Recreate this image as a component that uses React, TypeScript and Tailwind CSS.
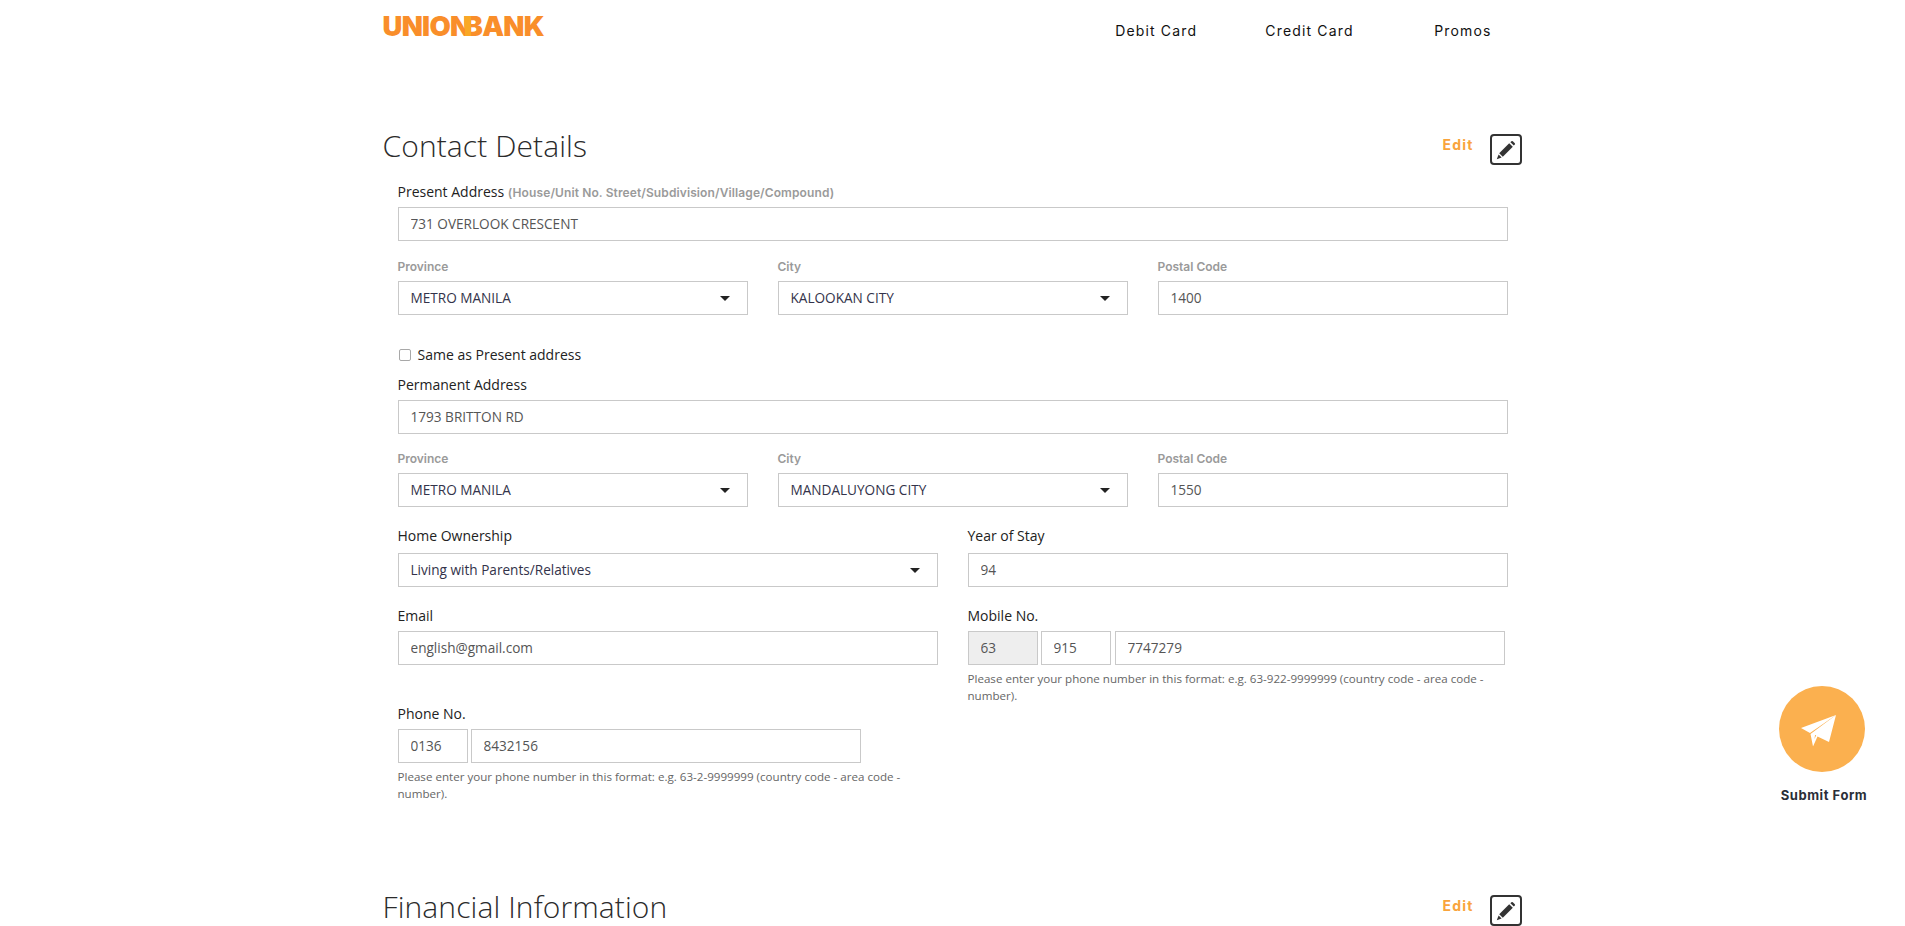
import React from 'react';

const inputClass = 'block w-full h-[34px] border border-[#c9c9c9] bg-white px-[12px] text-[13.6px] text-[#555] outline-none';

const Label = ({ children }: { children: React.ReactNode }) => (
    <label className="block h-[20px] leading-[20px] text-[14px] text-[#222]">{children}</label>
);

const SubLabel = ({ children }: { children: React.ReactNode }) => (
    <label className="block h-[20px] leading-[22px] text-[12px] font-semibold text-[#9a9a9a] font-['Inter',sans-serif] mb-[5px]">{children}</label>
);

const TextInput = ({ value, className = '' }: { value: string; className?: string }) => (
    <input type="text" readOnly value={value} className={`${inputClass} pb-[2px] ${className}`} />
);

const SelectBox = ({ value }: { value: string }) => (
    <div className="relative">
        <select value={value} onChange={() => {}} className={`${inputClass} appearance-none text-[#33334a]`}>
            <option>{value}</option>
        </select>
        <span className="absolute right-[18px] top-[15px] border-x-[5.5px] border-t-[5px] border-x-transparent border-t-[#222]" />
    </div>
);

const PencilIcon = () => (
    <svg width="20" height="20" viewBox="0 0 20 20" fill="#333">
        <path d="M14.4 2.2 L15.4 1.2 Q16.1 0.6 16.8 1.2 L18.8 3.2 Q19.4 3.9 18.8 4.6 L17.8 5.6 Z" />
        <path d="M13.2 3.2 L16.8 6.8 L6.8 16.8 L3.2 13.2 Z" />
        <path d="M2.6 14.4 L5.6 17.4 L0.8 19.2 Z" />
    </svg>
);

const SectionTitle = ({ title }: { title: string }) => (
    <div className="flex items-start justify-between h-[35px]">
        <h2 className="text-[30px] leading-[32px] font-light tracking-[0.1px] text-[#2b2b2b]">{title}</h2>
        <div className="flex items-start gap-[16px] mt-[4px] mr-[1px]">
            <span className="text-[14px] leading-[22px] font-bold tracking-[1.2px] text-[#f9a43c] font-['Inter',sans-serif]">Edit</span>
            <span className="flex items-center justify-center w-[32px] h-[31px] border-2 border-[#333] rounded-[4px]">
                <PencilIcon />
            </span>
        </div>
    </div>
);

const AddressRow = ({ city, postal }: { city: string; postal: string }) => (
    <div className="grid grid-cols-3 gap-x-[30px]">
        <div>
            <SubLabel>Province</SubLabel>
            <SelectBox value="METRO MANILA" />
        </div>
        <div>
            <SubLabel>City</SubLabel>
            <SelectBox value={city} />
        </div>
        <div>
            <SubLabel>Postal Code</SubLabel>
            <TextInput value={postal} />
        </div>
    </div>
);

const HelpText = ({ children }: { children: React.ReactNode }) => (
    <p className="mt-[5px] text-[11.6px] leading-[17px] text-[#666]">{children}</p>
);

export default function App() {
    return (
        <div className="relative h-[926px] overflow-hidden bg-white font-['Open_Sans',sans-serif]">
            <div className="w-[1170px] mx-auto px-[15px]">
                <header className="flex justify-between h-[130px]">
                    <div className="relative h-[20px] mt-[16px] flex items-center text-[27.5px] leading-[20px] font-black tracking-[-0.7px] text-[#f98e2a] font-['Inter',sans-serif]">
                        <span>UNION</span>
                        <span className="-ml-[6px]">BANK</span>
                        <span className="absolute left-[82px] top-0 w-[6px] h-[20px] bg-[#f9a825]" />
                    </div>
                    <nav className="grid grid-cols-3 w-[460px] h-[20px] mt-[21px] -mr-[17px] text-[14px] leading-[20px] tracking-[1.15px] text-[#111] text-center font-['Inter',sans-serif]">
                        <a>Debit Card</a>
                        <a>Credit Card</a>
                        <a>Promos</a>
                    </nav>
                </header>

                <section>
                    <SectionTitle title="Contact Details" />
                    <div className="px-[15px] mt-[17px]">
                        <Label>
                            Present Address{' '}
                            <span className="text-[12px] font-semibold tracking-[0.11px] text-[#9a9a9a] font-['Inter',sans-serif]">(House/Unit No. Street/Subdivision/Village/Compound)</span>
                        </Label>
                        <TextInput value="731 OVERLOOK CRESCENT" className="mt-[5px] mb-[15px]" />
                        <AddressRow city="KALOOKAN CITY" postal="1400" />

                        <label className="flex items-center h-[20px] mt-[29px] text-[14px] text-[#222]">
                            <input type="checkbox" className="appearance-none w-[12px] h-[12px] mt-[2px] ml-[1px] mr-[7px] bg-white border border-[#a8a8a8] rounded-[2px]" />
                            Same as Present address
                        </label>

                        <div className="mt-[11px]">
                            <Label>Permanent Address</Label>
                            <TextInput value="1793 BRITTON RD" className="mt-[5px] mb-[14px]" />
                        </div>
                        <AddressRow city="MANDALUYONG CITY" postal="1550" />

                        <div className="grid grid-cols-2 gap-x-[30px] mt-[19px]">
                            <div>
                                <Label>Home Ownership</Label>
                                <div className="mt-[7px]">
                                    <SelectBox value="Living with Parents/Relatives" />
                                </div>
                            </div>
                            <div>
                                <Label>Year of Stay</Label>
                                <TextInput value="94" className="mt-[7px]" />
                            </div>
                        </div>

                        <div className="grid grid-cols-2 gap-x-[30px] mt-[19px]">
                            <div>
                                <Label>Email</Label>
                                <TextInput value="english@gmail.com" className="mt-[5px]" />
                            </div>
                            <div>
                                <Label>Mobile No.</Label>
                                <div className="flex gap-[3px] mt-[5px] w-[537px]">
                                    <TextInput value="63" className="!w-[70px] shrink-0 !bg-[#eeeeee]" />
                                    <TextInput value="915" className="!w-[70px] shrink-0" />
                                    <TextInput value="7747279" className="flex-1 ml-[1px]" />
                                </div>
                                <HelpText>Please enter your phone number in this format: e.g. 63-922-9999999 (country code - area code - number).</HelpText>
                            </div>
                        </div>

                        <div className="grid grid-cols-2 gap-x-[30px]">
                            <div>
                                <Label>Phone No.</Label>
                                <div className="flex gap-[3px] mt-[5px] w-[463px]">
                                    <TextInput value="0136" className="!w-[70px] shrink-0" />
                                    <TextInput value="8432156" className="flex-1" />
                                </div>
                                <HelpText>Please enter your phone number in this format: e.g. 63-2-9999999 (country code - area code - number).</HelpText>
                            </div>
                        </div>
                    </div>
                </section>

                <section className="mt-[89px]">
                    <SectionTitle title="Financial Information" />
                </section>
            </div>

            <div className="absolute left-[1779px] top-[686px] flex flex-col items-center w-[86px]">
                <div className="flex items-center justify-center w-[86px] h-[86px] rounded-full bg-[#fbb04f]">
                    <svg width="36" height="32" viewBox="0 0 36 32" fill="white" className="-translate-x-[3px] translate-y-[1.5px]">
                        <path d="M35 0.5 L0 13.5 L9 18.5 Z" />
                        <path d="M35 0.5 L9.5 19.5 L12 32 L16.5 22 L28 27.5 Z M14 20.5 L13.5 24.5 L15.2 20.8 Z" fillRule="evenodd" />
                    </svg>
                </div>
                <span className="mt-[13px] ml-[4px] whitespace-nowrap text-[13px] leading-[20px] font-bold tracking-[0.55px] text-[#2b2f38] font-['Inter',sans-serif]">Submit Form</span>
            </div>
        </div>
    );
}
